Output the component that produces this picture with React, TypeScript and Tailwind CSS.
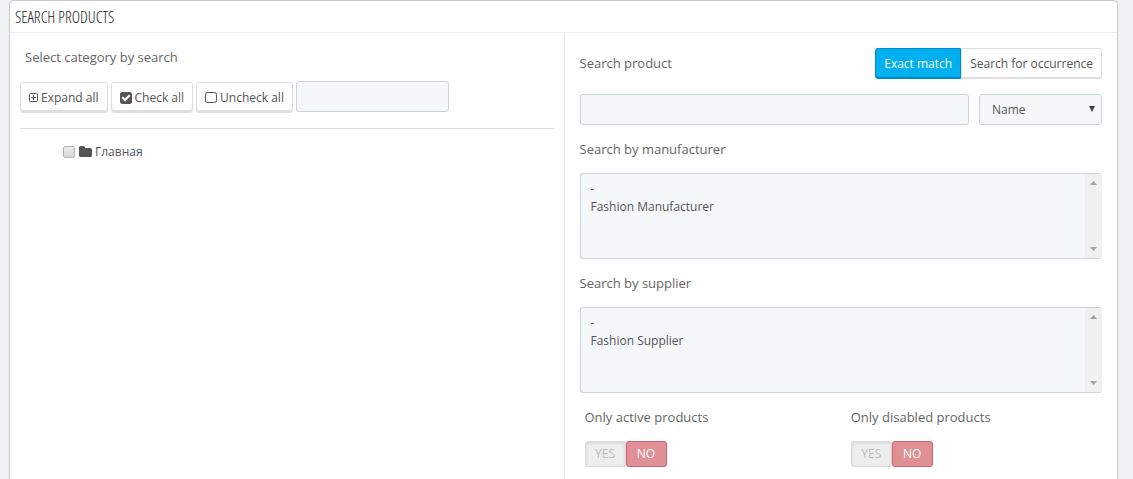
import { useState } from "react";
import type { ReactNode } from "react";

const labelClass = "text-[13px] leading-5 text-[#666666]";
const fieldClass =
  "rounded-[3px] border border-[#c7d6db] bg-[#f5f8f9] text-xs text-[#555555] outline-none";
const buttonClass =
  "flex h-[31px] items-center gap-[3px] rounded-[3px] border border-[#dedede] bg-white px-2 text-xs text-[#555555] shadow-[inset_0_-2px_0_#dedede]";

function PlusSquareIcon() {
  return (
    <svg className="size-[9px] shrink-0" viewBox="0 0 9 9" fill="none" stroke="currentColor" aria-hidden="true">
      <rect x="0.5" y="0.5" width="8" height="8" rx="0.8" />
      <path d="M4.5 2v5M2 4.5h5" />
    </svg>
  );
}

function CheckSquareIcon() {
  return (
    <svg className="size-[12px] shrink-0" viewBox="128 128 1536 1536" fill="currentColor" aria-hidden="true">
      <path d="M813 1299l614-614q19-19 19-45t-19-45l-102-102q-19-19-45-19t-45 19l-467 467-211-211q-19-19-45-19t-45 19l-102 102q-19 19-19 45t19 45l358 358q19 19 45 19t45-19zm851-883v960q0 119-84.5 203.5t-203.5 84.5h-960q-119 0-203.5-84.5t-84.5-203.5v-960q0-119 84.5-203.5t203.5-84.5h960q119 0 203.5 84.5t84.5 203.5z" />
    </svg>
  );
}

function SquareIcon() {
  return (
    <svg className="size-[12px] shrink-0" viewBox="0 0 12 12" fill="none" stroke="currentColor" aria-hidden="true">
      <rect x="0.5" y="0.5" width="11" height="10" rx="1.8" />
    </svg>
  );
}

function FolderIcon() {
  return (
    <svg className="mb-[2px] h-[11px] w-[13px] shrink-0" viewBox="64 128 1664 1408" preserveAspectRatio="none" fill="currentColor" aria-hidden="true">
      <path d="M1728 608v704q0 92-66 158t-158 66h-1216q-92 0-158-66t-66-158v-960q0-92 66-158t158-66h320q92 0 158 66t66 158v32h672q92 0 158 66t66 158z" />
    </svg>
  );
}

function ToolButton({ icon, children }: { icon: ReactNode; children: ReactNode }) {
  return (
    <button type="button" className={buttonClass}>
      {icon}
      {children}
    </button>
  );
}

function ListBox({ id, label, options }: { id: string; label: string; options: string[] }) {
  return (
    <div className="mt-[14px]">
      <label htmlFor={id} className={`block ${labelClass}`}>
        {label}
      </label>
      <div className="mt-[14px] flex h-[86px] overflow-hidden rounded-[3px] border border-r-0 border-[#c7d6db] bg-[#f5f8f9]">
        <select
          id={id}
          multiple
          className="min-w-0 flex-1 overflow-hidden bg-transparent px-2 py-[6px] text-xs text-[#555555] outline-none"
        >
          {options.map((option) => (
            <option key={option} className="min-h-0 px-[2px] pt-0 pb-px leading-4">
              {option}
            </option>
          ))}
        </select>
        <div className="flex w-[17px] flex-col items-center justify-between bg-[#f0f0f0] py-[7px] text-[#a3a3a3]" aria-hidden="true">
          <svg className="h-1 w-[7px]" viewBox="0 0 7 4" fill="currentColor">
            <path d="M0 4L3.5 0L7 4z" />
          </svg>
          <svg className="h-1 w-[7px]" viewBox="0 0 7 4" fill="currentColor">
            <path d="M0 0h7L3.5 4z" />
          </svg>
        </div>
      </div>
    </div>
  );
}

function Switch({ name, label }: { name: string; label: string }) {
  const [value, setValue] = useState("no");
  return (
    <fieldset className="px-[10px]">
      <legend className={labelClass}>{label}</legend>
      <div className="mt-[14px] flex h-[26px] w-[82px] rounded-[3px] bg-[#eeeeee] text-xs">
        {["yes", "no"].map((option) => (
          <label
            key={option}
            className={`flex flex-1 items-center justify-center rounded-[3px] border uppercase ${
              value === option
                ? "border-[#d0636c] bg-[#e08f95] text-white"
                : "border-[#dcdcdc] text-[#bbbbbb] shadow-[inset_0_1px_3px_rgba(0,0,0,0.12)]"
            }`}
          >
            <input
              type="radio"
              name={name}
              value={option}
              checked={value === option}
              onChange={() => setValue(option)}
              className="sr-only"
            />
            {option}
          </label>
        ))}
      </div>
    </fieldset>
  );
}

export default function App() {
  return (
    <div className="min-h-screen bg-[#eff1f2] pr-[15px] pl-[9px] font-['Open_Sans',sans-serif]">
      <section className="flex min-h-screen flex-col rounded-t-[5px] border border-b-0 border-[#c9c9c9] bg-white">
        <h3 className="flex h-8 items-center border-b border-[#eeeeee] px-[5px] font-['Open_Sans_Condensed_Light','Roboto_Condensed','Liberation_Sans_Narrow',sans-serif] text-base text-[#222222] uppercase">
          Search products
        </h3>
        <div className="grid flex-1 grid-cols-2">
          <div className="px-[10px] pt-[14px]">
            <label htmlFor="category-search" className={`block px-[5px] ${labelClass}`}>
              Select category by search
            </label>
            <div className="mt-[14px] flex items-start gap-[3px] border-b border-[#dddddd] pb-[15px]">
              <div className="flex gap-[3px] pt-px">
                <ToolButton icon={<PlusSquareIcon />}>Expand all</ToolButton>
                <ToolButton icon={<CheckSquareIcon />}>Check all</ToolButton>
                <ToolButton icon={<SquareIcon />}>Uncheck all</ToolButton>
              </div>
              <input id="category-search" type="text" className={`h-[31px] w-[153px] px-2 ${fieldClass}`} />
            </div>
            <ul className="mt-[14px] pl-[43px]">
              <li>
                <label className="flex items-center text-xs leading-[18px] text-[#555555]">
                  <input
                    type="checkbox"
                    className="size-3 appearance-none rounded-[2px] border border-[#b4b4b4] bg-linear-to-b from-[#ececec] to-[#d8d8d8] checked:bg-[#555555]"
                  />
                  <span className="ml-1 flex items-center gap-[3px]">
                    <FolderIcon />
                    Главная
                  </span>
                </label>
              </li>
            </ul>
          </div>

          <div className="border-l border-[#e6e6e6] px-[15px] pt-[15px]">
            <div className="flex items-center justify-between">
              <label htmlFor="product-search" className={`pb-px ${labelClass}`}>
                Search product
              </label>
              <div className="flex h-[31px] text-xs">
                <button
                  type="button"
                  className="rounded-l-[3px] border border-[#008abd] bg-[#00aff0] px-2 text-white shadow-[inset_0_-1px_0_#008abd]"
                >
                  Exact match
                </button>
                <button
                  type="button"
                  className="rounded-r-[3px] border border-[#dedede] bg-white px-2 text-[#555555] shadow-[inset_0_-1px_0_#dedede]"
                >
                  Search for occurrence
                </button>
              </div>
            </div>
            <div className="mt-[15px] flex gap-[10px]">
              <input id="product-search" type="text" className={`h-[31px] min-w-0 flex-1 px-2 ${fieldClass}`} />
              <div className="relative">
                <select aria-label="Search field" className={`h-[31px] w-[123px] appearance-none px-3 ${fieldClass}`}>
                  <option>Name</option>
                </select>
                <svg
                  className="pointer-events-none absolute top-3 right-[7px] h-[6px] w-[6px] text-[#444444]"
                  viewBox="0 0 6 6"
                  fill="currentColor"
                  aria-hidden="true"
                >
                  <path d="M0 0h6L3 6z" />
                </svg>
              </div>
            </div>
            <ListBox id="manufacturer" label="Search by manufacturer" options={["-", "Fashion Manufacturer"]} />
            <ListBox id="supplier" label="Search by supplier" options={["-", "Fashion Supplier"]} />
            <div className="-mx-[5px] mt-[14px] grid grid-cols-2">
              <Switch name="active" label="Only active products" />
              <Switch name="disabled" label="Only disabled products" />
            </div>
          </div>
        </div>
      </section>
    </div>
  );
}
